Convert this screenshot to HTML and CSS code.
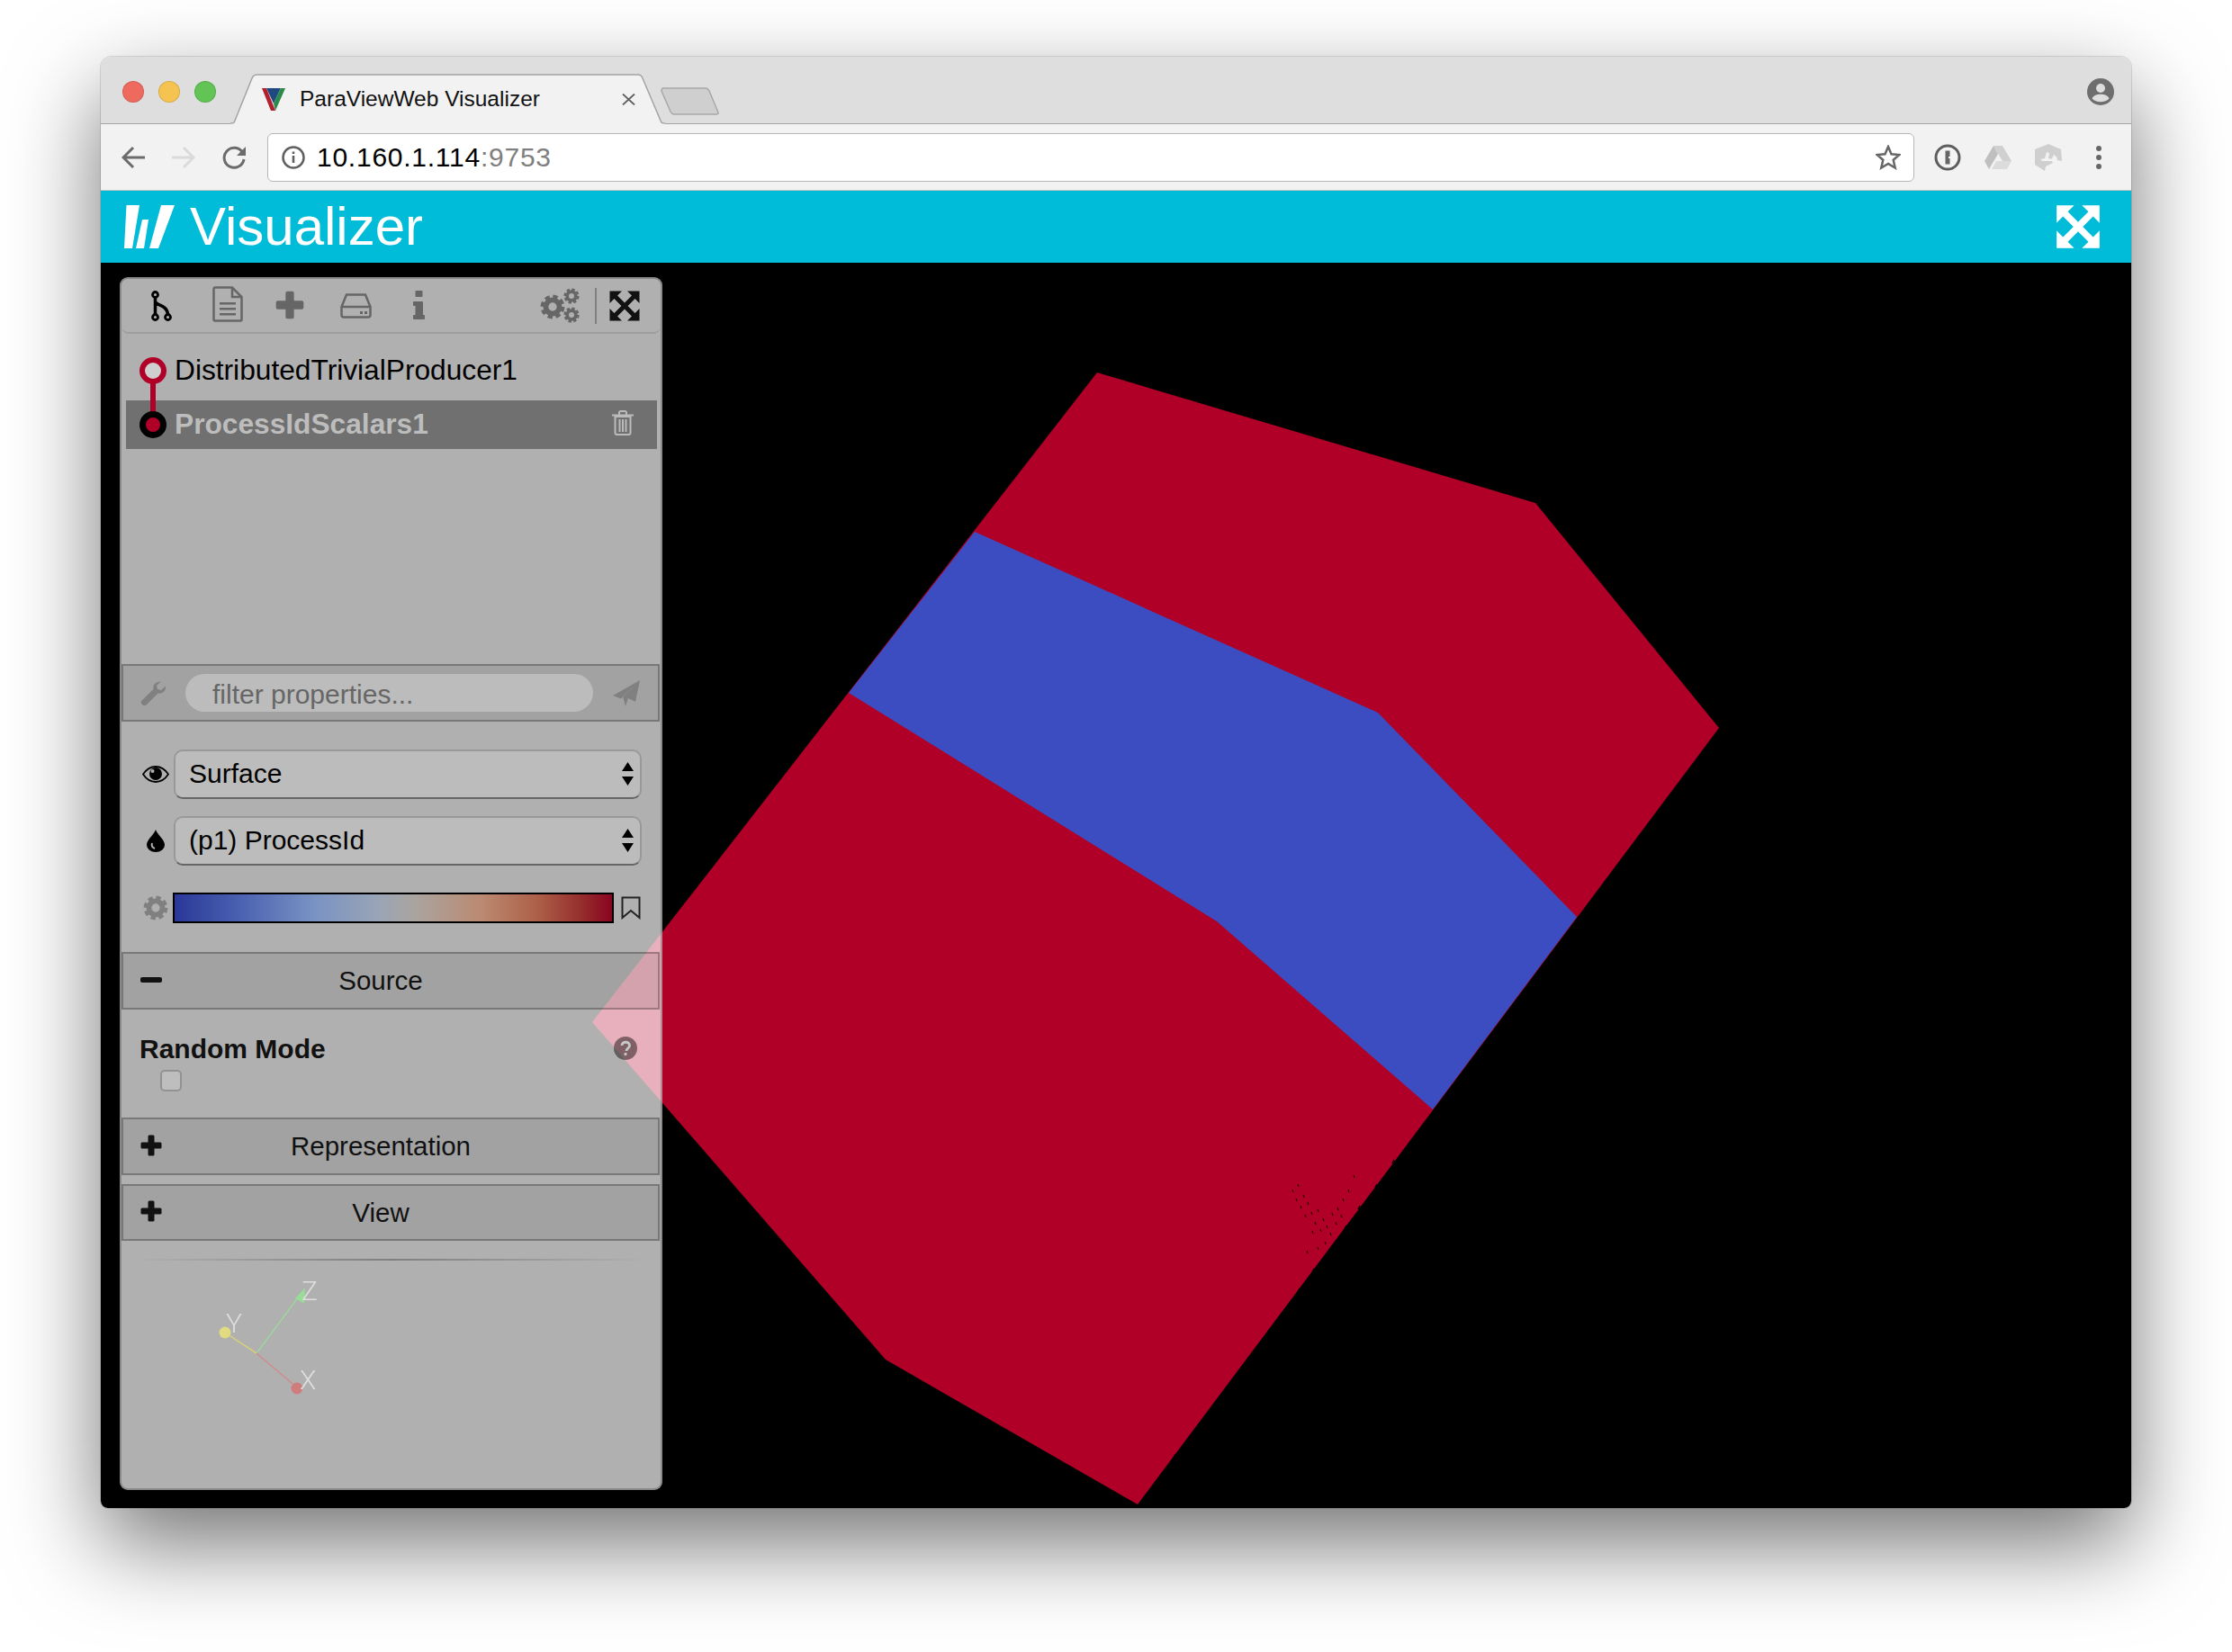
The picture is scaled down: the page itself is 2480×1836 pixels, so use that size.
FILE: index.html
```html
<!DOCTYPE html>
<html lang="en">
<head>
  <meta charset="UTF-8">
  <title>ParaViewWeb Visualizer</title>
  <link rel="stylesheet" href="styles.css">
</head>
<body>
  <svg class="defs" width="0" height="0">
    <symbol id="expand" viewBox="0 0 24 24">
      <path d="M1 1H10L6.700 4.300 12 9.600 17.300 4.300 14 1H23V10L19.700 6.700 14.400 12 19.700 17.300 23 14V23H14L17.300 19.700 12 14.400 6.700 19.700 10 23H1V14L4.300 17.300 9.600 12 4.300 6.700 1 10z" stroke-linejoin="round"/>
    </symbol>
    <symbol id="gear" viewBox="0 0 24 24">
      <circle cx="12" cy="12" r="9" fill="none" stroke="currentColor" stroke-width="5" stroke-dasharray="4.2 2.87"/>
      <circle cx="12" cy="12" r="6.5" fill="none" stroke="currentColor" stroke-width="5"/>
    </symbol>
    <symbol id="plus" viewBox="0 0 24 24">
      <path d="M8.500 2a1.500 1.500 0 0 1 1.500-1.500h4A1.500 1.500 0 0 1 15.500 2v6.500H22a1.500 1.500 0 0 1 1.500 1.500v4a1.500 1.500 0 0 1-1.500 1.500h-6.500V22a1.500 1.500 0 0 1-1.500 1.500h-4A1.500 1.500 0 0 1 8.500 22v-6.500H2A1.500 1.500 0 0 1 .5 14v-4A1.500 1.500 0 0 1 2 8.500h6.500z"/>
    </symbol>
    <symbol id="updown" viewBox="0 0 13 26">
      <path d="M6.500 0L13 10H0zM6.500 26L0 16h13z"/>
    </symbol>
  </svg>

  <div class="window">
    <div class="tabstrip">
      <span class="light red"></span>
      <span class="light yellow"></span>
      <span class="light green"></span>
      <div class="tab">
        <svg class="tab-shape" viewBox="0 0 483 57" preserveAspectRatio="none">
          <path d="M0 57V55C3 55 4 55 5 52L24 5C25 2 27 1 30 1H453C456 1 457 2 458 5L478 52C479 55 480 55 483 55V57z" fill="#f2f2f2"/>
          <path d="M0 55C3 55 4 55 5 52L24 5C25 2 27 1 30 1H453C456 1 457 2 458 5L478 52C479 55 480 55 483 55" fill="none" stroke="#a3a3a3" stroke-width="1.500"/>
        </svg>
        <svg class="favicon" viewBox="0 0 26 25">
          <path d="M5 0H21L13 17z" fill="#1f4a80"/>
          <path d="M0 0H5L15 25H10z" fill="#b0202e"/>
          <path d="M21 0H26L15 25 13 17z" fill="#2c8a4a"/>
        </svg>
        <span class="tab-title">ParaViewWeb Visualizer</span>
        <svg class="tab-close" viewBox="0 0 15 13"><path d="M1 .5l13 12M14 .5L1 12.500" stroke="#5f5f5f" stroke-width="1.800"/></svg>
      </div>
      <svg class="newtab" viewBox="0 0 65 31">
        <path d="M3 1H50C52 1 53 2 54 4L64 28C64 29 63 30 62 30H15C13 30 12 29 11 27L1 4C1 2 2 1 3 1z" fill="#cfcfcf" stroke="#a8a8a8" stroke-width="1.500"/>
      </svg>
      <svg class="account" viewBox="0 0 30 30">
        <circle cx="15" cy="15" r="15" fill="#6e6e6e"/>
        <circle cx="15" cy="11" r="5" fill="#dedede"/>
        <path d="M5.500 22.500C7 19 11 17.800 15 17.800S23 19 24.500 22.500C22 25 19 26.300 15 26.300S8 25 5.500 22.500z" fill="#dedede"/>
      </svg>
    </div>

    <div class="toolbar">
      <svg class="nav" viewBox="0 0 26 26"><path d="M26 13H2M13 2L2 13l11 11" fill="none" stroke="#6b6b6b" stroke-width="3"/></svg>
      <svg class="nav" viewBox="0 0 26 26"><path d="M0 13H24M13 2l11 11-11 11" fill="none" stroke="#dadada" stroke-width="3"/></svg>
      <svg class="nav" viewBox="0 0 26 26"><path d="M22.500 7.500A11 11 0 1 0 24 15" fill="none" stroke="#6b6b6b" stroke-width="3"/><path d="M26 1V11H16z" fill="#6b6b6b"/></svg>
      <div class="omnibox">
        <svg class="site-info" viewBox="0 0 26 26">
          <circle cx="13" cy="13" r="11.500" fill="none" stroke="#5f5f5f" stroke-width="2.500"/>
          <path d="M11.700 11h2.600v8h-2.600zM11.700 6.500h2.600v2.600h-2.600z" fill="#5f5f5f"/>
        </svg>
        <span class="url">10.160.1.114<span class="port">:9753</span></span>
        <svg class="star" viewBox="0 0 28 28"><path d="M14 2l3.500 8.200 8.900.8-6.700 5.800 2 8.700L14 20.900 6.300 25.500l2-8.700L1.600 11l8.900-.8z" fill="none" stroke="#666" stroke-width="2.500"/></svg>
      </div>
      <svg class="ext ext-first" viewBox="0 0 30 30">
        <circle cx="15" cy="15" r="13" fill="#f4f4f4" stroke="#5e5e5e" stroke-width="3"/>
        <path d="M12.500 7.500h5v6.500h-1.500v2h1.500v6.500h-5z" fill="#666"/>
      </svg>
      <svg class="ext" viewBox="0 0 30 30">
        <path d="M10 2h10L30 19H20z" fill="#d0d0d0"/>
        <path d="M10 2L0 19l5 9 10-17z" fill="#bfbfbf"/>
        <path d="M8 28l5-9h17l-5 9z" fill="#dcdcdc"/>
      </svg>
      <svg class="ext" viewBox="0 0 30 30">
        <path d="M15 0l14 6 1 13-5-1c0-3-2-5-4-6l-3 6 2 3-8 4-1 5-11-7V6z" fill="#cfcfcf"/>
        <path d="M6 17l5-1 2-7 3 1-1 6 6 1-1 2H8z" fill="#f2f2f2"/>
      </svg>
      <svg class="ext" viewBox="0 0 30 30">
        <circle cx="15" cy="5" r="3" fill="#666"/><circle cx="15" cy="15" r="3" fill="#666"/><circle cx="15" cy="25" r="3" fill="#666"/>
      </svg>
    </div>

    <div class="appbar">
      <svg class="logo" viewBox="0 0 56 48"><path d="M2.500 0H17L9 48H0zM20 16h7l-5 32h-9zM41 0h15L38 48H28z"/></svg>
      <span class="app-title">Visualizer</span>
      <svg class="app-expand"><use href="#expand"/></svg>
    </div>

    <div class="canvas">
      <svg class="scene" viewBox="0 0 2256 1384">
        <polygon points="1107,122 1594,267 1798,517 1152,1380 872,1219 546,844" fill="#b00027"/>
        <polygon points="971,299 1419,500 1640,727 1480,941 1240,732 831,478" fill="#3c4dc2"/>
        <!-- speckle near the lower edge of the mesh -->
        <path d="M1324 1030l1 3M1330 1024l1 3M1328 1040l1 3M1336 1036l1 3M1333 1048l1 3M1341 1044l1 3M1345 1055l1 3M1338 1058l1 3M1352 1052l1 3M1349 1066l1 3M1358 1062l1 3M1355 1074l1 3M1362 1070l1 3M1346 1076l1 3M1368 1056l1 3M1374 1050l1 3M1366 1078l1 3M1372 1066l1 3M1380 1040l1 3M1386 1030l1 3M1378 1058l1 3M1360 1088l1 3M1352 1094l1 3M1340 1098l1 3M1392 1014l1 3" stroke="#2a0009" stroke-width="1.200"/>
        <path d="M1435 1001l2 -4M1416 1028l2 -4M1397 1052l2 -4M1382 1074l2 -4M1366 1096l2 -4M1346 1122l2 -4M1330 1144l2 -4M1310 1172l2 -4M1296 1190l2 -4M1276 1218l2 -4M1258 1242l2 -4M1234 1274l2 -4M1214 1300l2 -4M1192 1328l2 -4" stroke="#000" stroke-width="1.500"/>
      </svg>

      <div class="panel">
        <div class="panel-tools">
          <svg class="ico-branch" viewBox="0 0 23 34">
            <circle cx="4.500" cy="4.500" r="3" fill="none" stroke="#000" stroke-width="2.800"/>
            <circle cx="4.500" cy="29.500" r="3" fill="none" stroke="#000" stroke-width="2.800"/>
            <circle cx="18.500" cy="29.500" r="3" fill="none" stroke="#000" stroke-width="2.800"/>
            <path d="M4.500 8V26M4.500 12C5 17 17 15 18.500 26" fill="none" stroke="#000" stroke-width="3.500"/>
          </svg>
          <svg class="ico-doc" viewBox="0 0 34 40">
            <path d="M3 1.500H22L32.500 12V37a1.500 1.500 0 0 1-1.500 1.500H3A1.500 1.500 0 0 1 1.500 37V3A1.500 1.500 0 0 1 3 1.500zM22 1.500V12H32.500" fill="none" stroke="#666" stroke-width="2.500"/>
            <path d="M8 18h18v2.500H8zM8 24h18v2.500H8zM8 30h18v2.500H8z" fill="#666"/>
          </svg>
          <svg class="ico-plus"><use href="#plus"/></svg>
          <svg class="ico-hdd" viewBox="0 0 35 28">
            <path d="M7 1.500H28L33.500 15V24a2.500 2.500 0 0 1-2.500 2.500H4A2.500 2.500 0 0 1 1.500 24V15zM1.500 15H33.500" fill="none" stroke="#666" stroke-width="2.500"/>
            <path d="M22 20h3v3h-3zM27 20h3v3h-3z" fill="#666"/>
          </svg>
          <svg class="ico-info" viewBox="0 0 13 32">
            <path d="M3.500 0h6A1 1 0 0 1 10.500 1v5a1 1 0 0 1-1 1h-6A1 1 0 0 1 2.500 6V1A1 1 0 0 1 3.500 0zM1 12h9a1 1 0 0 1 1 1v14h1a1 1 0 0 1 1 1v3a1 1 0 0 1-1 1H1a1 1 0 0 1-1-1v-3a1 1 0 0 1 1-1h1.500V17H1a1 1 0 0 1-1-1v-3a1 1 0 0 1 1-1z" fill="#666"/>
          </svg>
          <svg class="ico-gears" viewBox="0 0 44 39">
            <use href="#gear" x="0" y="7" width="28" height="28"/>
            <use href="#gear" x="26" y="0" width="18" height="18"/>
            <use href="#gear" x="26" y="21" width="18" height="18"/>
          </svg>
          <span class="tools-divider"></span>
          <svg class="ico-expand"><use href="#expand"/></svg>
        </div>

        <div class="pipeline">
          <div class="pipe-row">DistributedTrivialProducer1</div>
          <div class="pipe-row selected">
            ProcessIdScalars1
            <svg class="ico-trash" viewBox="0 0 24 28">
              <path d="M3.500 7H20.500V25a2 2 0 0 1-2 2H5.500a2 2 0 0 1-2-2zM0 5.500H24M8 5V2.500A1.500 1.500 0 0 1 9.500 1h5A1.500 1.500 0 0 1 16 2.500V5" fill="none" stroke="#bbb" stroke-width="2"/>
              <path d="M7.500 10h2v14h-2zM11 10h2v14h-2zM14.500 10h2v14h-2z" fill="#bbb"/>
            </svg>
          </div>
          <svg class="pipe-graph" viewBox="0 0 60 130">
            <path d="M20 41V101" stroke="#b00027" stroke-width="6"/>
            <circle cx="20" cy="41" r="12" fill="#cfcfcf" stroke="#b00027" stroke-width="6"/>
            <circle cx="20" cy="101" r="11.500" fill="#b00027" stroke="#000" stroke-width="7"/>
          </svg>
        </div>

        <div class="bar filter">
          <svg class="ico-wrench" viewBox="0 0 29 27">
            <path d="M28 5.500c.8 4.500-3 9-8.500 8L7 26a3.500 3.500 0 0 1-5-5L14.500 9c-1-5 3-8.500 8-8.500l-4.500 4.500 1 4 4 1z" fill="#808080"/>
          </svg>
          <div class="filter-input">filter properties...</div>
          <svg class="ico-send" viewBox="0 0 30 29"><path d="M30 0L25 24 17 20 14 29 11 18zM30 0L0 17l9 3.500z" fill="#808080"/></svg>
        </div>

        <div class="controls">
          <div class="control-row">
            <svg class="ico-eye" viewBox="0 0 30 19">
              <path d="M1 9.500C5 3.500 10 1 15 1s10 2.500 14 8.500C25 15.500 20 18 15 18S5 15.500 1 9.500z" fill="none" stroke="#000" stroke-width="1.800"/>
              <circle cx="15" cy="9" r="7" fill="#000"/>
              <circle cx="11.500" cy="6" r="2" fill="#b0b0b0"/>
            </svg>
            <div class="select">Surface<svg class="updown"><use href="#updown"/></svg></div>
          </div>
          <div class="control-row">
            <svg class="ico-drop" viewBox="0 0 20 25">
              <path d="M10 0C12 6 20 11 20 17a10 8 0 0 1-20 0C0 11 8 6 10 0z" fill="#000"/>
              <path d="M6 15c-1 3 0 5 3 6" fill="none" stroke="#b0b0b0" stroke-width="2"/>
            </svg>
            <div class="select">(p1) ProcessId<svg class="updown"><use href="#updown"/></svg></div>
          </div>
          <div class="color-row">
            <svg class="ico-colorgear"><use href="#gear"/></svg>
            <div class="colorbar"></div>
            <svg class="ico-bookmark" viewBox="0 0 22 26"><path d="M1.500 1.500H20.500V24L11 16 1.500 24z" fill="none" stroke="#222" stroke-width="2"/></svg>
          </div>
        </div>

        <div class="bar section">
          <svg class="ico-toggle" viewBox="0 0 24 24"><rect x="0" y="9" width="24" height="6" rx="2"/></svg>
          <span class="section-title">Source</span>
        </div>
        <div class="section-body">
          <div class="prop-head">
            <span class="prop-name">Random Mode</span>
            <svg class="ico-help" viewBox="0 0 26 26">
              <circle cx="13" cy="13" r="13" fill="#000" fill-opacity=".45"/>
              <path d="M9 10c0-5 8.500-5 8.500 0 0 3-3.500 3-3.500 6" fill="none" stroke="#c8c8c8" stroke-width="2.800"/>
              <rect x="11.600" y="18" width="2.800" height="3" fill="#c8c8c8"/>
            </svg>
          </div>
          <input class="prop-check" type="checkbox">
        </div>
        <div class="bar section">
          <svg class="ico-toggle"><use href="#plus"/></svg>
          <span class="section-title">Representation</span>
        </div>
        <div class="bar section next">
          <svg class="ico-toggle"><use href="#plus"/></svg>
          <span class="section-title">View</span>
        </div>

        <div class="panel-rule"></div>

        <svg class="orient" viewBox="0 -16 300 166">
          <path d="M150 83L199 17" stroke="#9ed49e" stroke-width="1.500"/>
          <path d="M150 83L115 60" stroke="#d4d07e" stroke-width="1.500"/>
          <path d="M150 83L195 121" stroke="#cf8c8c" stroke-width="1.500"/>
          <path d="M204 10L193 22 203 28z" fill="#98dc98"/>
          <circle cx="115" cy="60" r="6.500" fill="#e0da80"/>
          <circle cx="195" cy="122" r="6.500" fill="#cf7c7c"/>
          <text x="200" y="24" class="axis">Z</text>
          <text x="116" y="60" class="axis">Y</text>
          <text x="198" y="123" class="axis">X</text>
        </svg>
      </div>
    </div>
  </div>
</body>
</html>
```

FILE: styles.css
```css
* {
  box-sizing: border-box;
}
html, body {
  margin: 0;
  height: 100%;
}
body {
  background: #fff;
  padding: 63px 112px 160px;
  font-family: 'Liberation Sans', Arial, sans-serif;
  overflow: hidden;
}
svg {
  display: block;
  flex: none;
}
.defs {
  position: absolute;
}
.window {
  display: flex;
  flex-direction: column;
  width: 2256px;
  height: 1613px;
  border-radius: 12px 12px 8px 8px;
  overflow: hidden;
  box-shadow: 0 40px 100px rgba(0,0,0,0.55), 0 0 0 1px rgba(0,0,0,0.12);
}

/* browser chrome */
.tabstrip {
  display: flex;
  align-items: flex-start;
  height: 75px;
  padding-left: 24px;
  background: #dedede;
  border-bottom: 1.500px solid #a3a3a3;
}
.light {
  width: 24px;
  height: 24px;
  margin: 27px 16px 0 0;
  border-radius: 50%;
  border: 1px solid rgba(0,0,0,0.12);
}
.light.red { background: #ee6a5f; }
.light.yellow { background: #f5c350; }
.light.green { background: #61c454; }
.tab {
  position: relative;
  display: flex;
  align-items: center;
  width: 483px;
  height: 57px;
  margin-top: 19px;
  padding: 0 33px 0 35px;
}
.tab-shape {
  position: absolute;
  top: 0;
  left: 0;
  width: 100%;
  height: 100%;
}
.favicon {
  position: relative;
  width: 26px;
  height: 25px;
}
.tab-title {
  position: relative;
  margin: -2px 0 0 16px;
  font-size: 24.500px;
  color: #111;
  white-space: nowrap;
}
.tab-close {
  position: relative;
  width: 15px;
  height: 13px;
  margin-left: auto;
}
.newtab {
  width: 65px;
  height: 31px;
  margin: 34px 0 0 -5px;
}
.account {
  width: 30px;
  height: 30px;
  margin: 24px 19px 0 auto;
}
.toolbar {
  display: flex;
  align-items: center;
  height: 74px;
  padding-left: 23px;
  background: #f2f2f2;
  border-bottom: 1px solid #c4c4c4;
}
.nav {
  width: 26px;
  height: 26px;
  margin-right: 30px;
}
.nav:nth-child(3) {
  margin-right: 24px;
}
.omnibox {
  display: flex;
  align-items: center;
  width: 1830px;
  height: 54px;
  padding: 0 14px 0 15px;
  background: #fff;
  border: 1px solid #b6b6b6;
  border-radius: 6px;
}
.site-info {
  width: 26px;
  height: 26px;
}
.url {
  margin-left: 13px;
  font-size: 30px;
  letter-spacing: 0.750px;
  color: #000;
}
.port {
  color: #808080;
}
.star {
  width: 28px;
  height: 28px;
  margin-left: auto;
}
.ext {
  width: 30px;
  height: 30px;
  margin-left: 26px;
}
.ext-first {
  margin-left: 22px;
}
.appbar {
  display: flex;
  align-items: center;
  height: 80px;
  padding: 0 33px 0 26px;
  background: #00bcd8;
  color: #fff;
}
.logo {
  width: 56px;
  height: 48px;
  fill: #fff;
}
.app-title {
  margin-left: 17px;
  font-size: 60px;
  line-height: 80px;
}
.app-expand {
  width: 52px;
  height: 52px;
  margin-left: auto;
  fill: #fff;
}

/* render area with the floating panel on top */
.canvas {
  position: relative;
  flex: 1;
  background: #000;
}
.scene {
  position: absolute;
  top: 0;
  left: 0;
  width: 2256px;
  height: 1384px;
}
.panel {
  position: absolute;
  top: 16px;
  left: 21px;
  display: flex;
  flex-direction: column;
  width: 603px;
  height: 1348px;
  background: rgba(255,255,255,0.69);
  border: 2px solid rgba(0,0,0,0.22);
  border-radius: 9px;
  color: #000;
}
.panel-tools {
  display: flex;
  align-items: center;
  height: 61px;
  padding-right: 22px;
  border-bottom: 2px solid rgba(0,0,0,0.1);
  border-radius: 0 0 8px 8px;
}
.ico-branch { width: 23px; height: 34px; margin-left: 33px; }
.ico-doc { width: 34px; height: 40px; margin: -3px 0 0 45px; }
.ico-plus { width: 32px; height: 32px; margin: -2px 0 0 36px; fill: #666; }
.ico-hdd { width: 35px; height: 28px; margin-left: 40px; }
.ico-info { width: 13px; height: 32px; margin: -2px 0 0 46px; }
.ico-gears { width: 44px; height: 39px; margin-left: auto; color: #666; }
.tools-divider {
  width: 2px;
  height: 40px;
  margin: 0 13px 0 17px;
  background: #808080;
}
.ico-expand { width: 36px; height: 36px; fill: #111; }

.pipeline {
  position: relative;
  height: 367px;
  padding-top: 14px;
  font-size: 31.700px;
}
.pipe-row {
  display: flex;
  align-items: center;
  height: 54px;
  padding-bottom: 2px;
  padding-left: 59px;
}
.pipe-row.selected {
  margin: 6px 4px 0 5px;
  padding: 0 26px 2px 54px;
  background: #707070;
  color: #bdbdbd;
  font-weight: bold;
}
.ico-trash {
  width: 24px;
  height: 28px;
  margin: -2px 0 0 auto;
}
.pipe-graph {
  position: absolute;
  top: 0;
  left: 15px;
  width: 60px;
  height: 130px;
}

.bar {
  display: flex;
  align-items: center;
  height: 64px;
  margin-right: 1px;
  background: rgba(0,0,0,0.08);
  border: 2px solid rgba(0,0,0,0.26);
}
.filter {
  padding-left: 19px;
}
.ico-wrench { width: 29px; height: 27px; }
.filter-input {
  width: 453px;
  height: 42px;
  margin: 0 22px 0 21px;
  padding-left: 30px;
  border-radius: 21px;
  background: rgba(255,255,255,0.28);
  font-size: 30px;
  line-height: 45px;
  color: #666;
}
.ico-send { width: 30px; height: 29px; }

.controls {
  height: 256px;
  padding: 31px 0 0 23px;
}
.control-row {
  display: flex;
  align-items: center;
  margin-bottom: 19px;
}
.ico-eye { width: 30px; height: 19px; margin-right: 5px; }
.ico-drop { width: 20px; height: 25px; margin: 0 10px 0 5px; }
.select {
  display: flex;
  align-items: center;
  justify-content: space-between;
  width: 520px;
  height: 55px;
  padding: 0 7px 2px 15px;
  background: #bcbcbc;
  border: 2px solid #999;
  border-bottom-color: #666;
  border-radius: 10px;
  font-size: 30px;
  color: #000;
}
.updown {
  width: 13px;
  height: 26px;
  fill: #000;
}
.color-row {
  display: flex;
  align-items: center;
  margin-top: 30px;
}
.ico-colorgear {
  width: 28px;
  height: 28px;
  margin: 0 5px 0 1px;
  color: #808080;
}
.colorbar {
  width: 490px;
  height: 34px;
  border: 2px solid #000;
  background: linear-gradient(to right, #2a3798 0%, #4a62b0 15%, #7a93c4 32%, #9aa5b5 47%, #aaa49f 55%, #bb8a72 70%, #ad5f48 83%, #952e2c 93%, #8a0420 100%);
}
.ico-bookmark {
  width: 22px;
  height: 26px;
  margin-left: 8px;
}

.section {
  padding: 0 65px 0 19px;
  color: #111;
}
.section.next {
  margin-top: 10px;
  height: 63px;
}
.ico-toggle {
  width: 24px;
  height: 24px;
  margin-top: -3px;
  fill: #111;
}
.section-title {
  flex: 1;
  text-align: center;
  font-size: 29.500px;
}
.section-body {
  height: 120px;
  padding: 27px 26px 0 20px;
}
.prop-head {
  display: flex;
  align-items: center;
  justify-content: space-between;
  height: 34px;
}
.prop-name {
  font-size: 30px;
  font-weight: bold;
  color: #111;
}
.ico-help { width: 26px; height: 26px; margin-top: -2px; }
.prop-check {
  appearance: none;
  display: block;
  width: 24px;
  height: 24px;
  margin: 6px 0 0 23px;
  background: #bebebe;
  border: 2px solid #929292;
  border-radius: 5px;
}
.panel-rule {
  height: 2px;
  margin: 20px 14px 0 14px;
  background: linear-gradient(to right, rgba(120,120,120,0), #7f7f7f 50%, rgba(120,120,120,0));
}
.orient {
  width: 300px;
  height: 166px;
  margin-top: 4px;
  filter: blur(0.6px);
}
.axis {
  font-family: Roboto, 'Liberation Sans', sans-serif;
  font-size: 30px;
  font-weight: 300;
  fill: #dedede;
}
```
